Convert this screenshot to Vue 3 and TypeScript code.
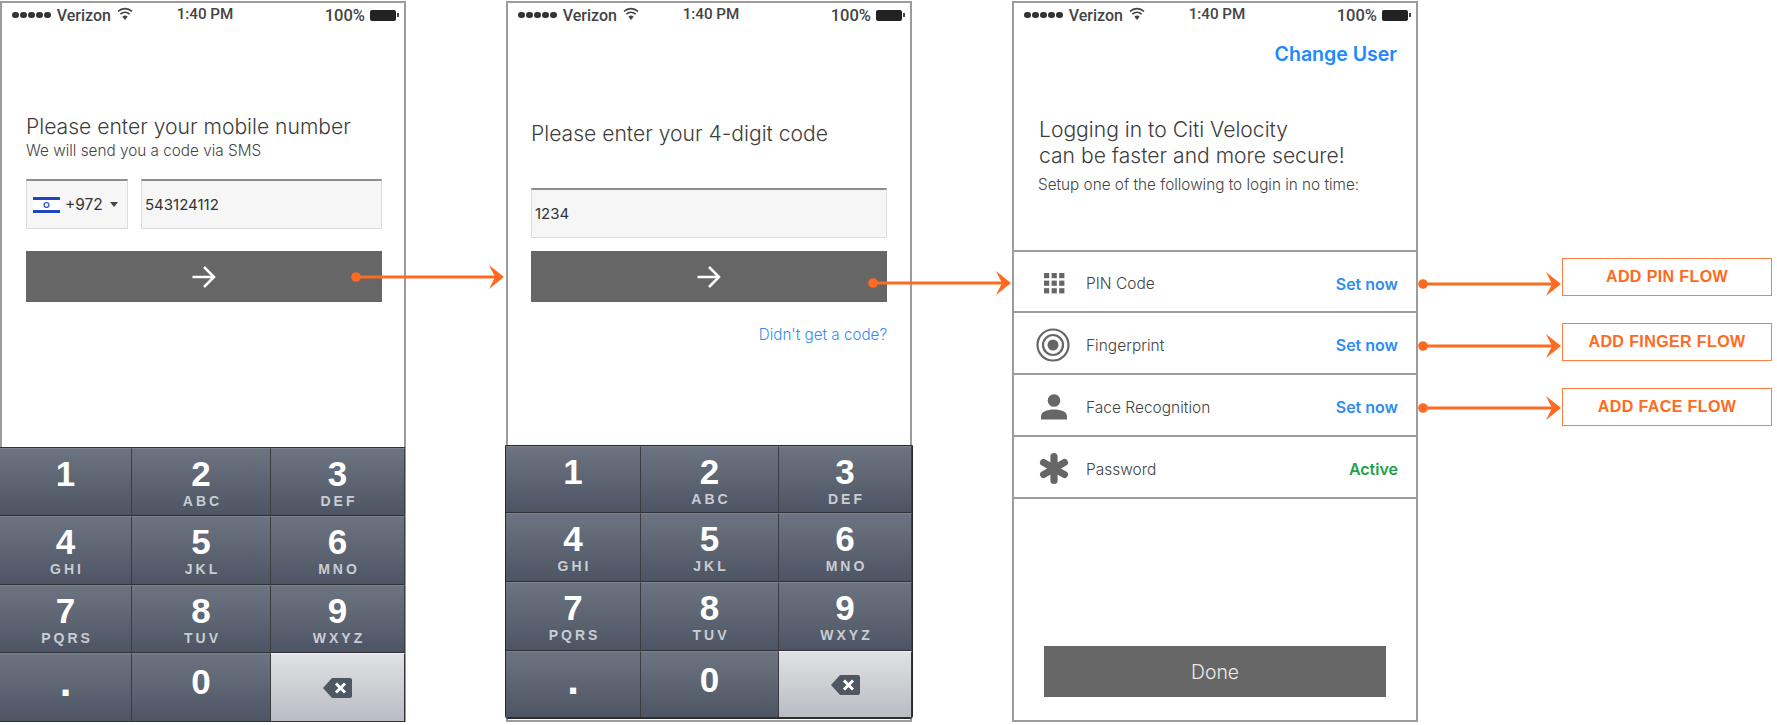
<script setup lang="ts">
interface Key {
  digit: string
  letters?: string
}

const keys: Key[] = [
  { digit: "1" },
  { digit: "2", letters: "ABC" },
  { digit: "3", letters: "DEF" },
  { digit: "4", letters: "GHI" },
  { digit: "5", letters: "JKL" },
  { digit: "6", letters: "MNO" },
  { digit: "7", letters: "PQRS" },
  { digit: "8", letters: "TUV" },
  { digit: "9", letters: "WXYZ" },
  { digit: "." },
  { digit: "0" },
]

const methods = [
  { name: "PIN Code", icon: "pin", action: "Set now", cls: "row-first" },
  { name: "Fingerprint", icon: "finger", action: "Set now", cls: "" },
  { name: "Face Recognition", icon: "face", action: "Set now", cls: "" },
  { name: "Password", icon: "star", action: "Active", cls: "" },
]

const flows = ["ADD PIN FLOW", "ADD FINGER FLOW", "ADD FACE FLOW"]

const pinDots = [0, 1, 2].flatMap((r) => [0, 1, 2].map((c) => ({ x: c * 7.6, y: r * 7.6 })))

// start x, end x, y of each orange connector
const connectors = [
  { x1: 356, x2: 504, y: 277 },
  { x1: 873, x2: 1011, y: 283 },
  { x1: 1423, x2: 1561, y: 284 },
  { x1: 1423, x2: 1561, y: 346 },
  { x1: 1423, x2: 1561, y: 408 },
]
</script>

<template>
  <div class="canvas">
    <!-- phone 1 -->
    <section class="phone">
      <div class="status">
        <div class="status-left">
          <span class="signal"><i v-for="n in 5" :key="n" /></span>
          <span>Verizon</span>
          <svg class="wifi" width="16" height="13" viewBox="0 0 15 12"><path d="M7.5 12 5 9a3.6 3.6 0 0 1 5 0Z" fill="#444" /><path d="M3.2 6.6a6.2 6.2 0 0 1 8.6 0M1 4a9.4 9.4 0 0 1 13 0" fill="none" stroke="#444" stroke-width="1.5" /></svg>
        </div>
        <span class="status-time">1:40 PM</span>
        <div class="status-right">
          <span>100%</span>
          <span class="battery"><i /></span>
        </div>
      </div>
      <div class="body">
        <h2 class="title t1">Please enter your mobile number</h2>
        <p class="sub">We will send you a code via SMS</p>
        <div class="fields">
          <div class="field select">
            <svg width="27" height="18" viewBox="0 0 27 18">
              <rect width="27" height="18" fill="#fff" />
              <rect y="1" width="27" height="3" fill="#1f45c0" />
              <rect y="14" width="27" height="3" fill="#1f45c0" />
              <circle cx="13.5" cy="9" r="2.4" fill="none" stroke="#3b62cc" stroke-width="1.4" />
            </svg>
            <span>+972</span>
            <i class="caret" />
          </div>
          <div class="field grow">543124112</div>
        </div>
        <div class="go go-1">
          <svg width="26" height="24" viewBox="0 0 26 24"><path d="M1.500 12h21M13 2 23 12 13 22" fill="none" stroke="#fff" stroke-width="2.500" /></svg>
        </div>
      </div>
      <div class="keypad">
        <div v-for="k in keys" :key="k.digit" class="key" :class="{ 'key-low': k.digit === '0', 'key-dot': k.digit === '.' }">
          <span class="digit">{{ k.digit }}</span>
          <span v-if="k.letters" class="letters">{{ k.letters }}</span>
        </div>
        <div class="key key-del">
          <svg width="29" height="20" viewBox="0 0 29 20"><path d="M9 0h18a2 2 0 0 1 2 2v16a2 2 0 0 1-2 2H9L0 10Z" fill="#4f5664" /><path d="M13 5.500 22 14.500M22 5.500 13 14.500" stroke="#fff" stroke-width="3" /></svg>
        </div>
      </div>
    </section>

    <!-- phone 2 -->
    <section class="phone">
      <div class="status">
        <div class="status-left">
          <span class="signal"><i v-for="n in 5" :key="n" /></span>
          <span>Verizon</span>
          <svg class="wifi" width="16" height="13" viewBox="0 0 15 12"><path d="M7.5 12 5 9a3.6 3.6 0 0 1 5 0Z" fill="#444" /><path d="M3.2 6.6a6.2 6.2 0 0 1 8.6 0M1 4a9.4 9.4 0 0 1 13 0" fill="none" stroke="#444" stroke-width="1.5" /></svg>
        </div>
        <span class="status-time">1:40 PM</span>
        <div class="status-right">
          <span>100%</span>
          <span class="battery"><i /></span>
        </div>
      </div>
      <div class="body body-2">
        <h2 class="title t2">Please enter your 4-digit code</h2>
        <div class="field code">1234</div>
        <div class="go go-2">
          <svg width="26" height="24" viewBox="0 0 26 24"><path d="M1.500 12h21M13 2 23 12 13 22" fill="none" stroke="#fff" stroke-width="2.500" /></svg>
        </div>
        <a class="resend">Didn't get a code?</a>
      </div>
      <div class="keypad keypad-2">
        <div v-for="k in keys" :key="k.digit" class="key" :class="{ 'key-low': k.digit === '0', 'key-dot': k.digit === '.' }">
          <span class="digit">{{ k.digit }}</span>
          <span v-if="k.letters" class="letters">{{ k.letters }}</span>
        </div>
        <div class="key key-del">
          <svg width="29" height="20" viewBox="0 0 29 20"><path d="M9 0h18a2 2 0 0 1 2 2v16a2 2 0 0 1-2 2H9L0 10Z" fill="#4f5664" /><path d="M13 5.500 22 14.500M22 5.500 13 14.500" stroke="#fff" stroke-width="3" /></svg>
        </div>
      </div>
    </section>

    <!-- phone 3 -->
    <section class="phone">
      <div class="status">
        <div class="status-left">
          <span class="signal"><i v-for="n in 5" :key="n" /></span>
          <span>Verizon</span>
          <svg class="wifi" width="16" height="13" viewBox="0 0 15 12"><path d="M7.5 12 5 9a3.6 3.6 0 0 1 5 0Z" fill="#444" /><path d="M3.2 6.6a6.2 6.2 0 0 1 8.6 0M1 4a9.4 9.4 0 0 1 13 0" fill="none" stroke="#444" stroke-width="1.5" /></svg>
        </div>
        <span class="status-time">1:40 PM</span>
        <div class="status-right">
          <span>100%</span>
          <span class="battery"><i /></span>
        </div>
      </div>
      <div class="change">Change User</div>
      <h2 class="title t3">Logging in to Citi Velocity<br />can be faster and more secure!</h2>
      <p class="sub s3">Setup one of the following to login in no time:</p>
      <ul class="methods">
        <li v-for="m in methods" :key="m.name" class="method" :class="m.cls">
          <span class="method-icon">
            <svg v-if="m.icon === 'pin'" width="21" height="21" viewBox="0 0 21 21">
              <rect v-for="(d, i) in pinDots" :key="i" :x="d.x" :y="d.y" width="5.200" height="5.200" fill="#666" />
            </svg>
            <svg v-else-if="m.icon === 'finger'" class="finger" width="34" height="34" viewBox="0 0 34 34">
              <circle cx="17" cy="17" r="15.500" fill="none" stroke="#666" stroke-width="2.200" />
              <circle cx="17" cy="17" r="10" fill="none" stroke="#666" stroke-width="2.200" />
              <circle cx="17" cy="17" r="5.500" fill="#666" />
            </svg>
            <svg v-else-if="m.icon === 'face'" width="26" height="26" viewBox="0 0 26 26">
              <circle cx="13" cy="6.500" r="6.300" fill="#666" />
              <path d="M0 25.500v-3c0-5 6-7 13-7s13 2 13 7v3Z" fill="#666" />
            </svg>
            <svg v-else width="32" height="33" viewBox="0 0 32 33">
              <path d="M16 4.500v24M5.600 10.500l20.800 12M26.400 10.500 5.600 22.500" stroke="#666" stroke-width="7.200" stroke-linecap="round" />
            </svg>
          </span>
          <span class="method-name">{{ m.name }}</span>
          <span class="method-action" :class="{ active: m.action === 'Active' }">{{ m.action }}</span>
        </li>
      </ul>
      <div class="done">Done</div>
    </section>

    <div class="flows">
      <div v-for="f in flows" :key="f" class="flow">{{ f }}</div>
    </div>

    <!-- connectors lie over the phones -->
    <svg class="connectors" width="1777" height="725" viewBox="0 0 1777 725">
      <g v-for="c in connectors" :key="c.x1 + '-' + c.y" fill="#ff6a22">
        <circle :cx="c.x1" :cy="c.y" r="4.800" />
        <rect :x="c.x1" :y="c.y - 1.500" :width="c.x2 - c.x1 - 6" height="3" />
        <path :d="`M${c.x2} ${c.y}l-15-12 6 12-6 12Z`" />
      </g>
    </svg>
  </div>
</template>

<style scoped>
.canvas {
  position: relative;
  display: flex;
  align-items: flex-start;
  gap: 100px;
  width: 1777px;
  height: 725px;
  padding-top: 1px;
  box-sizing: border-box;
  overflow: hidden;
  font-family: Inter, "Liberation Sans", sans-serif;
  color: #444;
}

.phone {
  display: flex;
  flex-direction: column;
  flex: none;
  box-sizing: border-box;
  width: 406px;
  height: 721px;
  border: 2px solid #9c9c9c;
}

.status {
  display: grid;
  grid-template-columns: 1fr auto 1fr;
  align-items: center;
  height: 24px;
  padding: 0 6px 0 10px;
  font-family: Roboto, "Liberation Sans", sans-serif;
  font-size: 16px;
  font-weight: 500;
  color: #444;
}

.status-left {
  display: flex;
  align-items: center;
  gap: 6px;
}

.signal {
  display: flex;
  gap: 1.200px;
}

.signal i {
  width: 6.800px;
  height: 6.800px;
  border-radius: 50%;
  background: #333;
}

.wifi {
  margin-top: -3px;
}

.status-time {
  margin-top: -2px;
  font-size: 15.200px;
}

.status-right {
  display: flex;
  align-items: center;
  justify-content: flex-end;
  gap: 5px;
  font-size: 16.500px;
}

.battery {
  position: relative;
  display: block;
  width: 26px;
  height: 11px;
  margin-right: 2px;
  background: #222;
  border-radius: 2px;
}

.battery i {
  position: absolute;
  right: -2.500px;
  top: 3.500px;
  width: 2px;
  height: 4px;
  background: #444;
}

.body {
  padding: 0 22px 0 24px;
}

.body-2 {
  padding: 0 23px;
}

.title {
  margin: 0;
  font-size: 21.100px;
  font-weight: 300;
  line-height: 24px;
  color: #3d3d3d;
}

.t1 {
  margin-top: 88px;
}

.t2 {
  margin-top: 95px;
}

.t3 {
  margin: 51px 0 0 25px;
  line-height: 26px;
}

.sub {
  margin: 3px 0 0;
  font-size: 15.300px;
  font-weight: 300;
  line-height: 18px;
  color: #444;
}

.s3 {
  margin: 7px 0 0 24px;
}

.fields {
  display: flex;
  gap: 13px;
  margin-top: 19px;
}

.field {
  display: flex;
  align-items: center;
  box-sizing: border-box;
  height: 50px;
  padding: 0 3px;
  background: #f6f6f6;
  border: 1px solid #dcdcdc;
  border-top: 2px solid #8e8e8e;
  font-size: 15px;
  color: #333;
}

.select {
  gap: 5px;
  width: 102px;
  padding-left: 6px;
  font-size: 15.500px;
}

.caret {
  width: 0;
  height: 0;
  margin-left: 2px;
  border: 4px solid transparent;
  border-top: 5px solid #444;
  border-bottom: 0;
}

.grow {
  flex: 1;
}

.code {
  margin-top: 42px;
}

.go {
  display: flex;
  align-items: center;
  justify-content: center;
  height: 51px;
  background: #666;
}

.go-1 {
  margin-top: 22px;
}

.go-2 {
  margin-top: 13px;
}

.resend {
  display: block;
  margin-top: 24px;
  font-size: 15.200px;
  font-weight: 300;
  line-height: 18px;
  text-align: right;
  color: #2f8cf2;
}

.keypad {
  display: grid;
  grid-template-columns: 132px 139px 134px;
  grid-template-rows: 68px 69px 68px 69px;
  flex: none;
  box-sizing: border-box;
  width: 405px;
  height: 275px;
  margin: auto 0 -2px -2px;
  border-top: 1px solid #333;
  font-family: "Liberation Sans", sans-serif;
}

.keypad-2 {
  grid-template-columns: 135px 138px 133px;
  grid-template-rows: 67px 69px 69px 67px;
  width: 408px;
  height: 274px;
  margin: auto 0 1px -3px;
  border: 1px solid #2a2a2a;
  border-radius: 0 0 3px 3px;
  overflow: hidden;
}

.key {
  display: flex;
  flex-direction: column;
  align-items: center;
  padding-top: 5px;
  box-sizing: border-box;
  background: linear-gradient(#6d7481, #4d5463);
  border-top: 1px solid #7d838e;
  border-bottom: 1px solid #2f3136;
  border-right: 1px solid #3a3c42;
  color: #fff;
}

.key-low {
  padding-top: 8px;
}

.key-dot {
  padding-top: 8px;
}

.key-dot .digit {
  font-size: 42px;
}

.digit {
  font-size: 35px;
  font-weight: 700;
  line-height: 40px;
}

.letters {
  margin-right: -3px;
  font-size: 14px;
  font-weight: 700;
  line-height: 14px;
  letter-spacing: 3px;
  color: #c9cdd3;
}

.key-del {
  justify-content: center;
  padding: 0;
  background: linear-gradient(#e0e1e4, #b9bcc3);
  border-top-color: #f0f0f0;
  border-right-color: #333;
}

.change {
  margin: 16px 19px 0 0;
  font-size: 19.500px;
  font-weight: 600;
  line-height: 23px;
  text-align: right;
  color: #1e88ff;
}

.methods {
  margin: 56px 0 0;
  padding: 0;
  list-style: none;
  border-bottom: 2px solid #9c9c9c;
}

.method {
  display: flex;
  align-items: center;
  box-sizing: border-box;
  height: 62px;
  padding: 3px 18px 0 21px;
  border-top: 2px solid #9c9c9c;
}

.row-first {
  height: 61px;
}

.method-icon {
  display: flex;
  align-items: center;
  justify-content: center;
  width: 38px;
  margin-right: 13px;
}

.finger {
  margin-left: -3px;
}

.method-name {
  flex: 1;
  margin-top: 1px;
  font-size: 15.500px;
  font-weight: 300;
  color: #444;
}

.method-action {
  margin-top: 1px;
  font-size: 16px;
  font-weight: 600;
  color: #2f8cf2;
}

.method-action.active {
  color: #22a04a;
}

.done {
  display: flex;
  align-items: center;
  justify-content: center;
  width: 342px;
  height: 51px;
  margin: auto 0 23px 30px;
  background: #666;
  font-size: 19.400px;
  font-weight: 300;
  color: #ececec;
}

.flows {
  display: flex;
  flex-direction: column;
  gap: 27px;
  flex: none;
  width: 210px;
  margin: 257px 0 0 44px;
}

.flow {
  display: flex;
  align-items: center;
  justify-content: center;
  box-sizing: border-box;
  height: 38px;
  border: 1px solid #ff7d42;
  font-family: "Liberation Sans", sans-serif;
  font-size: 16px;
  font-weight: 700;
  letter-spacing: 0.4px;
  color: #ff6a22;
}

.connectors {
  position: absolute;
  top: 0;
  left: 0;
  pointer-events: none;
}
</style>

<style>
html,
body {
  margin: 0;
  background: #fff;
}
</style>
